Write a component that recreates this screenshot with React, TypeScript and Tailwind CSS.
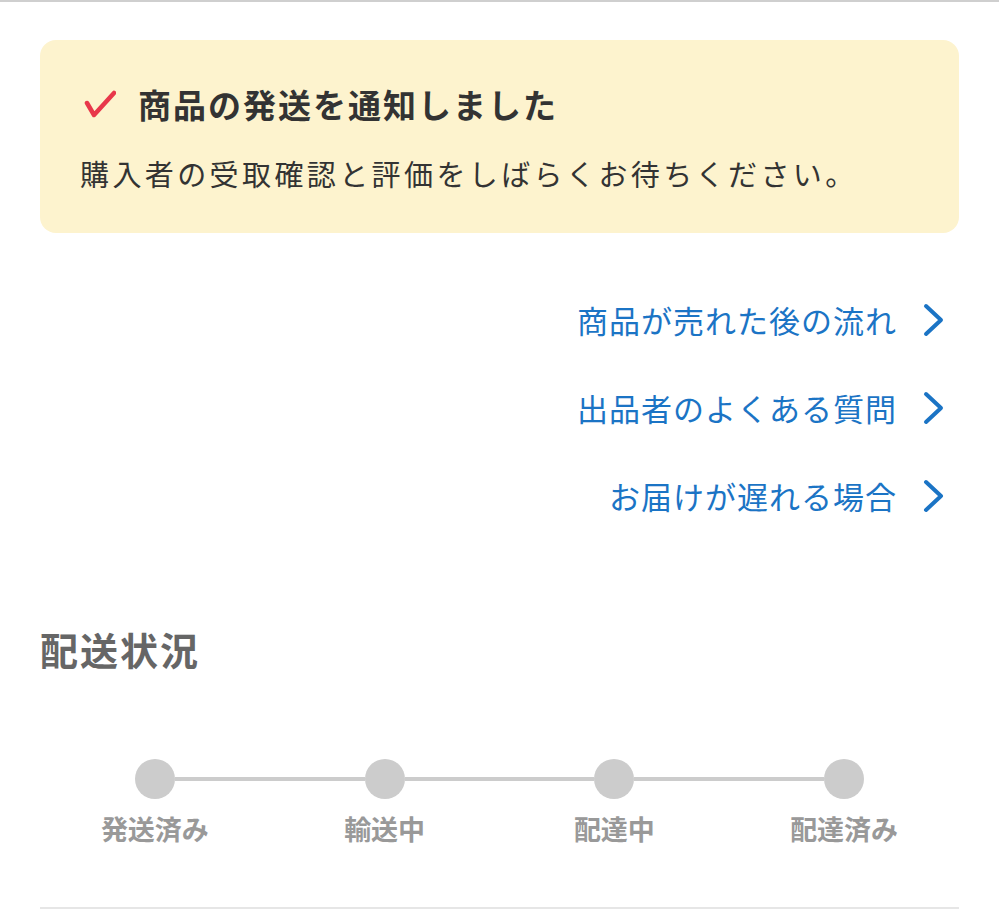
import { Fragment } from "react";

const links = ["商品が売れた後の流れ", "出品者のよくある質問", "お届けが遅れる場合"];
const steps = ["発送済み", "輸送中", "配達中", "配達済み"];

function ChevronRight() {
  return (
    <svg width="22" height="34" viewBox="0 0 22 34" fill="none" className="shrink-0">
      <polyline points="3,3 18,17 3,31" stroke="#1b74c5" strokeWidth="4" strokeLinecap="round" strokeLinejoin="round" />
    </svg>
  );
}

export default function App() {
  return (
    <div
      className="w-full bg-white border-t-2 border-[#cfcfcf] px-10 pt-[38px]"
      style={{ fontFamily: '"Noto Sans CJK JP", "Noto Sans", sans-serif' }}
    >
      {/* 発送通知 */}
      <div className="h-[193px] rounded-2xl bg-[#fdf3ce] pl-10 pt-[44px]">
        <div className="flex items-center pl-[4px] h-10">
          <svg width="32" height="28" viewBox="0 0 32 28" fill="none" className="shrink-0">
            <polyline points="3,13 10,25 30,3" stroke="#e8374a" strokeWidth="4.5" strokeLinecap="round" strokeLinejoin="round" />
          </svg>
          <h1 className="ml-[22px] text-[33px] leading-10 font-bold tracking-[2px] text-[#333]">商品の発送を通知しました</h1>
        </div>
        <p className="mt-[29px] text-[29px] leading-10 tracking-[3.4px] text-[#333]">
          購入者の受取確認と評価をしばらくお待ちください。
        </p>
      </div>

      {/* ヘルプリンク */}
      <div className="mt-[43px] flex flex-col items-end pr-[14px]">
        {links.map((label) => (
          <a key={label} href="#" className="h-[88px] flex items-center gap-[26px] text-[#1b74c5]">
            <span className="text-[31px] leading-[44px] tracking-[1px]">{label}</span>
            <ChevronRight />
          </a>
        ))}
      </div>

      {/* 配送状況 */}
      <h2 className="mt-[85px] text-[38px] leading-[48px] font-bold tracking-[2px] text-[#666]">配送状況</h2>

      <div className="mt-[86px] grid grid-cols-4">
        {steps.map((step, i) => (
          <Fragment key={step}>
            <div className="flex flex-col items-center">
              <div className="flex w-full h-10 items-center">
                <div className={i === 0 ? "flex-1 h-1" : "flex-1 h-1 bg-[#cccccc]"} />
                <div className="w-10 h-10 rounded-full bg-[#cccccc] shrink-0" />
                <div className={i === steps.length - 1 ? "flex-1 h-1" : "flex-1 h-1 bg-[#cccccc]"} />
              </div>
              <span className="mt-3 text-[27px] leading-9 font-bold text-[#999]">{step}</span>
            </div>
          </Fragment>
        ))}
      </div>

      <div className="mt-[60px] border-t-2 border-[#e6e6e6]" />
    </div>
  );
}
